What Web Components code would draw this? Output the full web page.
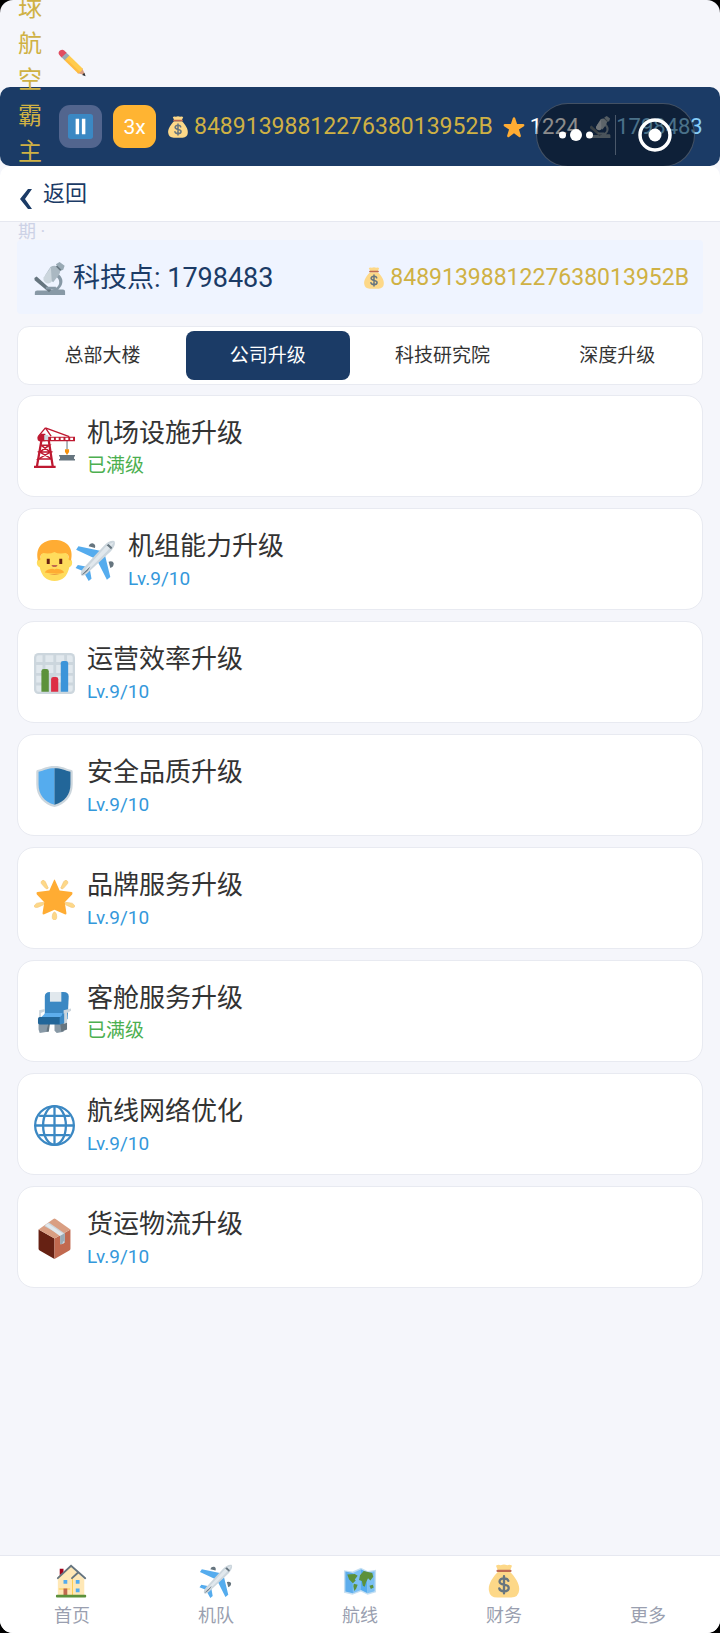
<!DOCTYPE html>
<html lang="zh-CN">
<head>
<meta charset="utf-8">
<meta name="viewport" content="width=device-width, initial-scale=1">
<title>公司升级</title>
<style>
  html { background: #000; }
  body { margin: 0; font-family: Roboto, "Noto Sans CJK SC", sans-serif; color: #333; }
</style>
</head>
<body>
<game-app></game-app>
<script>
const ICONS = {
  pencil: `<path fill="#d99e82" d="M35.2 33.6 31 24.5l-6.500 6.500z"/><path fill="#ffcc4d" d="M7.500 13.500 13.500 7.500 32 25.500q-1.500 4-6 6z"/><path fill="#ffac33" d="m9.500 11.500 19 18.500-2.500 1.500L7.500 13.500z" opacity=".5"/><path fill="#99aab5" d="m4.500 10.500 6-6 4 4-6 6z"/><path fill="#dd2e44" opacity=".85" d="M1.500 7.500C0 5 1 3 2.500 2S6 0 8 1.800l3 3-6.500 6z"/><path fill="#292f33" d="m35.500 34.900-4.500-1.500 2.800-3z"/>`,
  pause: `<rect width="36" height="36" rx="4" fill="#3b88c3"/><path fill="#fff" d="M11 7h5v22h-5zm9 0h5v22h-5z"/>`,
  bag: `<path fill="#fdd888" d="M24.500 8.500H11.500C6 14 1 21.500 2 28q1 7.500 9 7.500h14.500q8-.5 8.500-7.500C35 21.500 30 14 24.500 8.500z"/><path fill="#fdd888" d="M9.500 1.800Q12 0 14.500 1.200q3.500-1.500 7 0Q24 0 26.500 1.800L24.500 6.500h-13z"/><rect x="10" y="6" width="16" height="2.600" rx="1.200" fill="#bf6952"/><path fill="none" stroke="#67757f" stroke-width="2.500" stroke-linecap="round" d="M18 13v18M22.500 17.800c-.5-2-2.300-2.600-4.500-2.600-2.800 0-4.700 1.200-4.700 3.300 0 5 9.700 1.800 9.700 6.800 0 2.400-2.200 3.500-5 3.500-2.600 0-4.500-1-5-3"/>`,
  star: `<path fill="#ffac33" d="M27.287 34.627c-.404 0-.806-.124-1.152-.371L18 28.422l-8.135 5.834c-.343.247-.745.371-1.148.371-.406 0-.814-.126-1.160-.379-.69-.5-.98-1.385-.721-2.194l3.034-9.792-8.062-5.681c-.685-.505-.97-1.393-.708-2.203.264-.809 1.016-1.357 1.866-1.363L12.947 13l3.179-9.549c.268-.809 1.023-1.353 1.874-1.353.851 0 1.606.545 1.875 1.353L23 13l10.036.015c.853.006 1.606.556 1.867 1.363.263.81-.022 1.698-.708 2.203l-8.062 5.681 3.034 9.792c.26.809-.033 1.695-.72 2.194-.347.254-.753.379-1.160.379z"/>`,
  scope: `<path fill="#8899a6" d="M24 10.500c7 3.500 9.500 9 7.500 14-.9 2.400-2.300 4-4 5.500h5c2 0 2.500 1 2.500 2.500V36H2v-2.500Q2 31 4.500 31h12c6.500-1 11-3 12-7.500.7-4-1.500-7-5.500-9z"/><path fill="#66757f" d="m1.500 17.500 2.500-1.800L20 30.200 17.500 33 1.800 20z"/><path fill="#8899a6" d="M14 27h11v3H14z"/><path fill="#99aab5" d="m25 2.500 4-2.500 5.500 4-1.500 4.500-4 1.500z"/><path fill="#aab8c2" d="M19 5.500Q24 2 29 6.500q2 3-1 8L22 22l-9-7z"/><path fill="#ccd6dd" d="m19.500 6-8 11q-1 3 1.500 5t5.500 1l2-1.500z"/><path fill="#66757f" d="m26.500 4 4.500 4.500-1.500 1L25 5z"/>`,
  crane: `<path fill="none" stroke="#66757f" stroke-width=".9" d="M29 12v8"/><path fill="none" stroke="#be1931" stroke-width="1.200" d="M10 .8 4 8M10 .8 15 8m-5-7.200L31 8.500"/><path fill="#be1931" d="M5 8.500h31v4H5z"/><path fill="#fff" d="M15 9.500h2.500v2H15zm4.200 0h2.500v2h-2.500zm4.200 0h2.500v2h-2.500zm4.200 0h2.500v2h-2.500zm4.200 0h2.500v2h-2.500z"/><path fill="#be1931" d="M3 8.500 6 6h4v6.500H4.500Q3 12 3 10zM0 34h19v2H0z"/><path fill="#ccd6dd" d="M9 7h3.500v4.500H9z"/><path fill="none" stroke="#be1931" stroke-width="2" d="M6.500 12 2.500 35M13 12l3.500 23"/><path fill="none" stroke="#be1931" stroke-width="1.300" d="M6 16h7.500L5 22h9.500L4 28h11.500M6 16l8.500 6L5 22l10.500 6"/><path fill="#f4900c" d="M27.200 19.500h3.600v2.500L29 24.500 27.200 22z"/><path fill="#66757f" d="M22 24.500h14V26h-.8v2h.8v1.500H22V28h.8v-2H22z"/>`,
  face: `<path fill="#ffdc5d" d="M5 17q-2.500 0-2.500 3T5 24q2.500 12 13 12t13-12q2.500-1 2.500-4T31 17L28 8H8z"/><path fill="#ffac33" d="M3.500 18C1 7 7 0 18 0s17 7 14.500 18L30.500 17.500Q31 13 28 11.500q-7 1-10-1-4 2-10 1-3 1.500-2.500 6z"/><path fill="#662113" d="M11.200 16.500h2.600V21h-2.600zm11 0h2.600V21h-2.600z"/><path fill="#c1694f" d="M15.500 22h5q0 1.800-2.500 1.800T15.500 22z"/><path fill="#ffac33" d="M9.500 28.500q1-2.500 5-3 2.500-.7 3.500.5 1-1.200 3.500-.5 4 .5 5 3-4 1.300-8.500 1t-8.500-1z"/><path fill="#e28c3c" d="M13.500 29.800h9q-4.500 1.400-9 0z"/>`,
  plane: `<path fill="#66757f" d="M12 5.500q1-3 4-2.500 2.500 1 1.500 4zm17.500 13.500q4-1 4.500 1.500 0 3.500-3 4z"/><path fill="#55acee" d="M22 9.500 3 5.500 1 8.500l16 7.500zM26.500 14l4.500 18.500-3 2.500-8-16zM10.500 23.500 2.500 22 .5 24.500 9 28zm2.500 2 1.500 8.500-2.500 2-4.500-8z"/><path fill="#ccd6dd" d="M5.500 31Q4 28.500 8 24L25 5.500Q30 0 34.500 .8q2 3-3 9L12 28q-5 4.500-6.500 3z"/><path fill="#e1e8ed" d="M9 26 27 6q3-3 7-4-2 4-6 8L10 28z"/><path fill="#66757f" d="m5.500 31 8-8q-2 5-8 8zM29.500 3.500l3.200 3-1 1.700-3.900-3.500z"/>`,
  chart: `<rect width="36" height="36" rx="4" fill="#ccd6dd"/><path fill="#e1e8ed" d="M2 4q0-2 2-2h3.500v6H2zm8-2h7v6h-7zm9.500 0h7v6h-7zM29 2h3q2 0 2 2v4h-5zM2 10.500h5.500v7H2zm8 0h7v7h-7zm9.500 0h7v7h-7zm9.500 0h5v7h-5zM2 20h5.500v6H2zm17.500 0h7v6h-7zm9.500 0h5v6h-5zM2 28.500h5.500V34H4q-2 0-2-2zm27 0h5V32q0 2-2 2h-3z"/><path fill="#5c913b" d="M6.500 34V16q0-2 2-2h2.500q2 0 2 2v18z"/><path fill="#dd2e44" d="M15 34V23q0-2 2-2h2.300q2 0 2 2v11z"/><path fill="#3b94d9" d="M23.500 34V9q0-2 2-2H28q2 0 2 2v25z"/>`,
  shield: `<path fill="#ccd6dd" d="M33 3.500c-5-1-8-3.500-15-3.500S8 2.500 3 3.500q-1 0-1 1.500v11c0 11 7 18 16 20 9-2 16-9 16-20V5q0-1.500-1-1.500z"/><path fill="#55acee" d="M18 2C12 2 9 4 4 5v11c0 9 5 15.500 14 18z"/><path fill="#226699" d="M18 2c6 0 9 2 14 3v11c0 9-5 15.500-14 18z"/>`,
  glow: `<g fill="#fdd888" stroke="#f4c77b" stroke-width=".6"><path d="M7 1.500q2-1 3 1l2.500 5.500q-1 1.500-2.500 0L6.500 4q-.8-1.500.5-2.500zM29 1.500q-2-1-3 1L23.500 8q1 1.500 2.500 0l3.500-4q.8-1.500-.5-2.500zM1 22.500q1-1.500 3-1.500l4.500-.5q1 1.500-1 2.500l-4 1.800Q.5 25.500 0 24zM35 22.500q-1-1.500-3-1.500l-4.500-.5q-1 1.500 1 2.500l4 1.800q3 .7 3.500-.8zM16.300 31q1.700-4 3.400 0 1 5-1.700 5t-1.700-5z"/></g><path fill="#ffac33" d="m18.500 1 4 9L33 11.500q1.500.5.5 2L27 20.500 28.500 30q0 1.500-1.500 1L18 27l-9 4q-1.500.5-1.500-1L9 20.500 2.500 13.500q-1-1.500.5-2L13.500 10l4-9q.5-1 1 0z"/>`,
  seat: `<path fill="#8899a6" d="M4 25h8v10l-7 1-1-3zm14 2 8 1V35l-6 1-2-2z"/><path fill="#66757f" d="m23 28 6-4v9l-5 2zM12 28h2l-1 7h-2z"/><path fill="#3b88c3" d="M9.500 20V4Q9.500 0 14 0h12q4.500 0 4.500 4l-1 20z"/><path fill="#e1e8ed" d="M14 0h10v8.500H14z"/><path fill="#ccd6dd" d="m4.500 16 5-1v2L6 18.500V23H4.500zM26 16l6.500-1.500v2L29 18.500V27l-3 1z"/><path fill="#5dadec" d="M5.500 23 10 18.500h15l-1 4.500z"/><path fill="#269" d="M3.500 23.500q0-1.500 1.500-1.500h18v6.500H5q-1.500 0-1.500-1.500z"/><path fill="#3b88c3" d="m22.500 22.500 4-4v9l-4 1z"/>`,
  globe: `<g fill="none" stroke="#3b88c3" stroke-width="2"><circle cx="18" cy="18" r="17"/><ellipse cx="18" cy="18" rx="10" ry="17"/><path d="M18 1v34M1 18h34M4.500 9.500h27M4.500 26.500h27"/></g>`,
  box: `<path fill="#662113" d="m4 10 14 8v18L5 28.500Q4 28 4 27z"/><path fill="#c1694f" d="m32 10-14 8v18l13-7.500q1-.5 1-1.500z"/><path fill="#d99e82" d="M18 18 4 10 17 .8q1-.6 2 0L32 10z"/><path fill="#ccd6dd" d="m9 7 4-3 14 9.500v8q-1.500 2-4 1.500V15z"/><path fill="#e1e8ed" d="m10 6.300 2-1.500L26 14l-3 2z"/><path fill="#99aab5" d="m23 15.500 4-2.200v7.500l-1.500-.3-.5 2-2 .5z"/>`,
  house: `<path fill="#a0041e" d="M5 5h4v9H5z"/><path fill="#ffe8b6" d="M3 13.500 17 3l14 13v18H3z"/><path fill="#ffcc4d" d="M18 15h1v18h-1zM4 26h12v1H4z"/><path fill="none" stroke="#66757f" stroke-width="2" stroke-linecap="round" d="M3 15 17 2l15 13M18 15l6.500-6"/><path fill="#55acee" d="M9 17h4v4H9zm13 0h4v4h-4zm0 9h4v4h-4z"/><path fill="#c1694f" d="M9 26h4v7H9z"/><rect x="1" y="32.500" width="32" height="3" rx="1" fill="#5c913b"/>`,
  map: `<path fill="#c5dff2" d="M1 6.500 10 8l9-4 7 3.500L35 6v24l-9 2.500-7-3.500-9 3.500-9-2z"/><path fill="#5dadec" d="m2.500 8 8 1.500v21.500l-8-2z"/><path fill="#7cc0f4" d="m10.500 9.500 8.500-4v22l-8.500 3.500z"/><path fill="#55acee" d="m19 5.500 7 3.500v22l-7-3.500z"/><path fill="#7cc0f4" d="m26 9 7.500-1.300v21.100L26 31z"/><path fill="#5c913b" d="m4.500 11 8-.5 3 2-3 4 1 1-3 3-4-4zm7 10 4 1-1.500 4-2 2.500-1-5zM18 12l4-4.500L31 9.500l1 4-3 4-2.500-2.500-2 4-1.500 5-2-1-1-5-3-1zM28 23l3.500-1 1 3-3 1.500z"/>`,
};

function define(name, css, html) {
  customElements.define(name, class extends HTMLElement {
    constructor() {
      super();
      const tpl = document.createElement('template');
      const markup = typeof html === 'function' ? html(this) : html;
      tpl.innerHTML = `<style>*{box-sizing:border-box}button,a{font:inherit;color:inherit;text-decoration:none;border:0;background:none;padding:0;cursor:pointer}${css}</style>${markup}`;
      this.attachShadow({ mode: 'open' }).append(tpl.content.cloneNode(true));
    }
  });
}

define('game-icon',
  `:host{display:inline-block;flex:none;width:var(--size,41px);height:var(--size,41px)} svg{display:block;width:100%;height:100%}`,
  el => `<svg viewBox="0 0 36 36" aria-hidden="true">${ICONS[el.getAttribute('name')]}</svg>`);

/* Currency value with its icon in front. */
define('stat-value',
  `:host{display:flex;align-items:center;gap:5px;font-size:23px;line-height:32px;white-space:nowrap;--size:22px}`,
  el => `<game-icon name="${el.getAttribute('icon')}"></game-icon><span><slot></slot></span>`);

define('host-capsule',
  `:host{position:absolute;top:16px;right:25px;width:159px;height:64px;border:1px solid rgba(255,255,255,.22);border-radius:32px;background:rgba(0,0,0,.45);display:flex;align-items:center}
   button{flex:1;height:100%;display:grid;place-items:center} i{width:1px;height:40px;background:rgba(255,255,255,.25)} svg{display:block}`,
  `<button aria-label="更多"><svg width="36" height="14" viewBox="0 0 36 14" fill="#fff"><circle cx="4.500" cy="7" r="3.500"/><circle cx="18" cy="7" r="6"/><circle cx="31.500" cy="7" r="3.500"/></svg></button><i></i><button aria-label="关闭"><svg width="34" height="34" viewBox="0 0 34 34"><circle cx="17" cy="17" r="15" fill="none" stroke="#fff" stroke-width="3.500"/><circle cx="17" cy="17" r="6.500" fill="#fff"/></svg></button>`);

define('game-header',
  `:host{position:relative;display:block;margin-top:87px;background:#1b3b66;border-radius:10px}
   .bar{display:flex;align-items:center;height:79px;padding-left:59px;padding-right:17px}
   .title{position:absolute;left:18px;bottom:-4px;width:24px;margin:0;font-size:24px;line-height:36px;font-weight:400;color:#cfb144;word-break:break-all}
   .date{position:absolute;left:18px;top:133px;font-size:18px;line-height:24px;color:#cdd2e6;white-space:pre}
   .edit{position:absolute;left:58px;top:-38px;--size:28px;line-height:0}
   .ctl{width:43px;height:43px;border-radius:11px;margin-right:11px;display:grid;place-items:center;flex:none;font-size:21px;color:#fff}
   .pause{background:#52658e;--size:25px} .speed{background:#ffb432}
   .money{color:#cfb144;margin-right:10px}.rep,.tech{font-size:22px}.rep{color:#fff;margin-right:10px}.tech{color:#87cefa}`,
  `<div class="bar"><button class="ctl pause" aria-label="暂停"><game-icon name="pause"></game-icon></button><button class="ctl speed">3x</button>
   <stat-value class="money" icon="bag">8489139881227638013952B</stat-value><stat-value class="rep" icon="star">1224</stat-value><stat-value class="tech" icon="scope">1798483</stat-value></div>
   <h1 class="title">球航空霸主</h1><span class="date">期 ·</span><button class="edit" aria-label="编辑"><game-icon name="pencil"></game-icon></button><host-capsule></host-capsule>`);

define('back-bar',
  `:host{position:relative;display:flex;height:56px;background:#fff;border-bottom:1px solid #e6e8f0;border-radius:10px 10px 0 0}
   button{display:flex;align-items:center;gap:11px;padding-left:20px;font-size:22px;line-height:32px;color:#1b3b66} svg{margin-top:10px}`,
  `<button><svg width="12" height="20" viewBox="0 0 12 20"><path fill="#1b3b66" d="M12 0H8L0 10l8 10h4L5 10z"/></svg><span>返回</span></button>`);

define('tech-summary',
  `:host{display:flex;align-items:center;justify-content:space-between;height:74px;padding:2px 14px 0 16px;background:#eff4ff;border-radius:4px}
   .points{display:flex;align-items:center;gap:7px;font-size:27px;line-height:40px;color:#1b3b66;--size:33px} stat-value{color:#cfb144}`,
  `<div class="points"><game-icon name="scope"></game-icon><span>科技点: 1798483</span></div><stat-value icon="bag">8489139881227638013952B</stat-value>`);

define('tab-strip',
  `:host{display:flex;gap:2px;padding:4px 3px;background:#fff;border:1px solid #e8eaf1;border-radius:12px}
   button{flex:1 1 auto;height:49px;border-radius:8px;font-size:19px;line-height:28px;color:#333} .on{background:#1b3b66;color:#fff}`,
  `<button>总部大楼</button><button class="on" aria-current="true">公司升级</button><button>科技研究院</button><button>深度升级</button>`);

define('upgrade-card',
  `:host{display:flex;align-items:center;gap:12px;padding:18px 16px 16px;background:#fff;border:1px solid #e8eaf1;border-radius:17px}
   .icons{display:flex} h2{margin:0;font-size:26px;line-height:38px;font-weight:400;color:#333} p{margin:0;font-size:19px;line-height:28px;color:#3498db} .max{color:#4caf50}`,
  el => `<div class="icons">${el.getAttribute('icons').split(' ').map(n => `<game-icon name="${n}"></game-icon>`).join('')}</div><div><h2><slot></slot></h2><p class="${el.hasAttribute('max') ? 'max' : ''}">${el.hasAttribute('max') ? '已满级' : 'Lv.9/10'}</p></div>`);

define('bottom-nav',
  `:host{display:block;background:#fff;border-top:1px solid #e6e8f0} nav{display:flex}
   a{flex:1;display:flex;flex-direction:column;align-items:center;padding:8px 0 3px;font-size:18px;line-height:28px;color:#9a9fb0;--size:34px} .gap{height:34px} span{margin-top:4px}`,
  `<nav><a href="#home"><game-icon name="house"></game-icon><span>首页</span></a><a href="#fleet"><game-icon name="plane"></game-icon><span>机队</span></a><a href="#routes"><game-icon name="map"></game-icon><span>航线</span></a><a href="#finance"><game-icon name="bag"></game-icon><span>财务</span></a><a href="#more"><div class="gap"></div><span>更多</span></a></nav>`);

define('game-app',
  `:host{display:flex;flex-direction:column;min-height:100vh;background:#f5f6fb;border-radius:13px;overflow:hidden}
   main{flex:1;padding:18px 17px} tech-summary{margin-bottom:12px} tab-strip{margin-bottom:10px} section{display:grid;gap:11px}`,
  `<game-header></game-header><back-bar></back-bar>
   <main><tech-summary></tech-summary><tab-strip></tab-strip><section>
   <upgrade-card icons="crane" max>机场设施升级</upgrade-card>
   <upgrade-card icons="face plane">机组能力升级</upgrade-card>
   <upgrade-card icons="chart">运营效率升级</upgrade-card>
   <upgrade-card icons="shield">安全品质升级</upgrade-card>
   <upgrade-card icons="glow">品牌服务升级</upgrade-card>
   <upgrade-card icons="seat" max>客舱服务升级</upgrade-card>
   <upgrade-card icons="globe">航线网络优化</upgrade-card>
   <upgrade-card icons="box">货运物流升级</upgrade-card>
   </section></main><bottom-nav></bottom-nav>`);
</script>
</body>
</html>
